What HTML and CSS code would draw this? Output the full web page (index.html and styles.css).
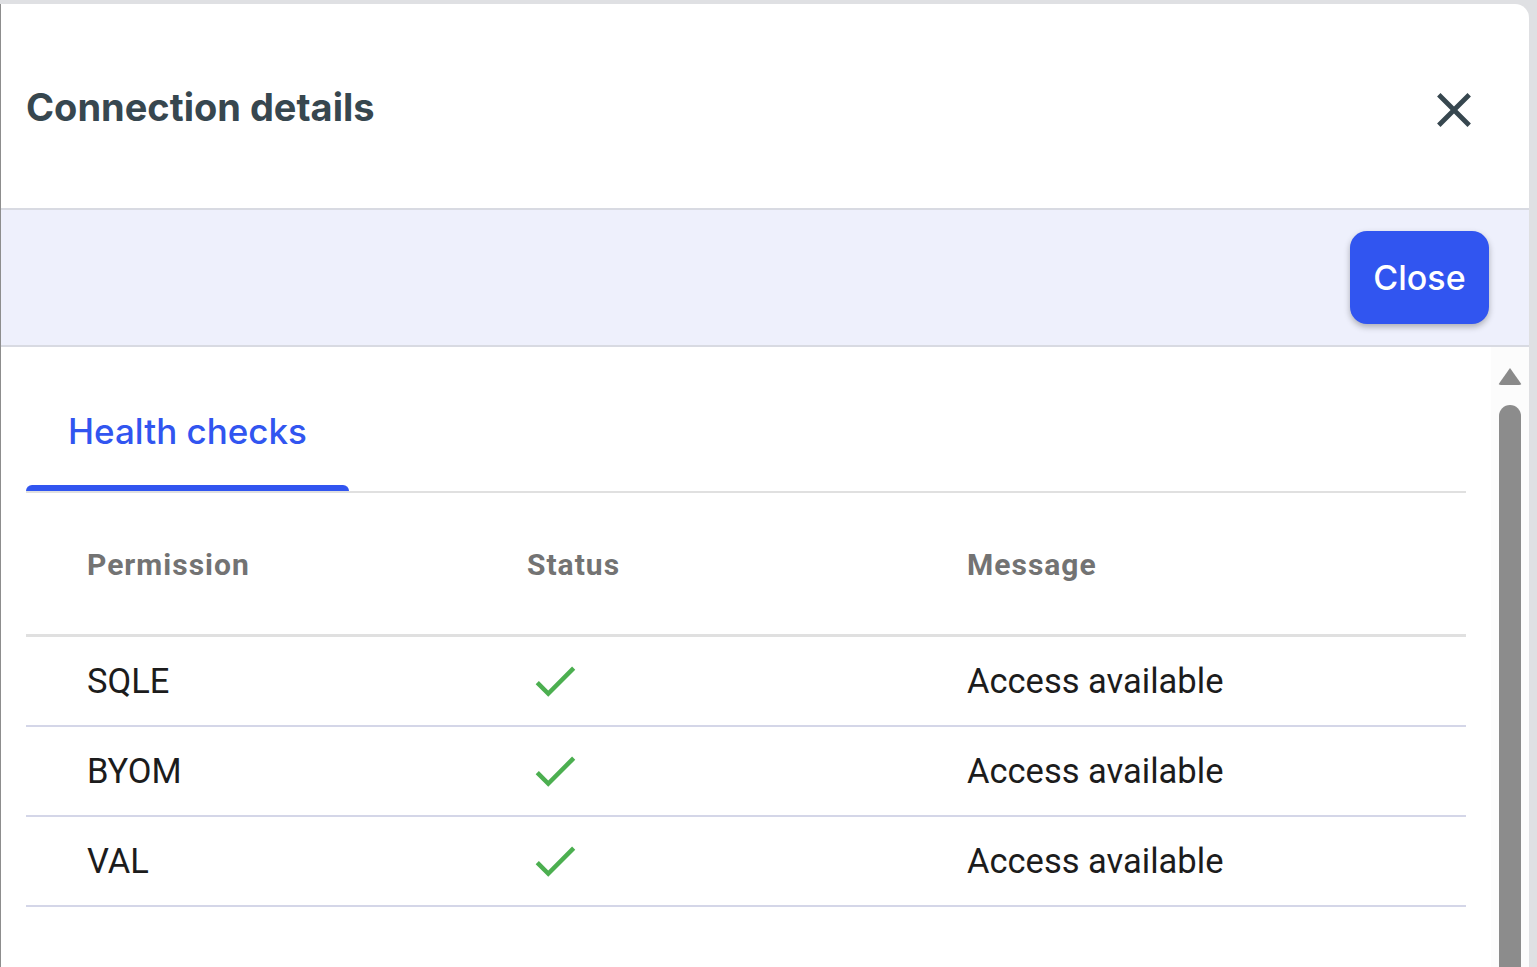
FILE: index.html
```html
<!DOCTYPE html>
<html lang="en">
<head>
<meta charset="utf-8">
<title>Connection details</title>
<link rel="stylesheet" href="styles.css">
</head>
<body>
<div class="page">
  <div class="dialog">
    <header class="dialog-header">
      <h1 class="dialog-title">Connection details</h1>
      <button class="icon-btn" aria-label="Close">
        <svg viewBox="0 0 24 24" width="58" height="58"><path d="M19 6.41 17.59 5 12 10.59 6.41 5 5 6.41 10.59 12 5 17.59 6.41 19 12 13.41 17.59 19 19 17.59 13.41 12z" fill="#37474f"/></svg>
      </button>
    </header>
    <div class="dialog-actions">
      <button class="btn-primary">Close</button>
    </div>
    <div class="dialog-body">
      <div class="content">
        <div class="tabs">
          <div class="tab active">Health checks</div>
        </div>
        <div class="table">
          <div class="row head">
            <div class="cell">Permission</div>
            <div class="cell">Status</div>
            <div class="cell">Message</div>
          </div>
          <div class="row">
            <div class="cell">SQLE</div>
            <div class="cell"><svg class="check" viewBox="0 0 24 24"><path d="M9 16.17 4.83 12l-1.42 1.41L9 19 21 7l-1.41-1.41z"/></svg></div>
            <div class="cell">Access available</div>
          </div>
          <div class="row">
            <div class="cell">BYOM</div>
            <div class="cell"><svg class="check" viewBox="0 0 24 24"><path d="M9 16.17 4.83 12l-1.42 1.41L9 19 21 7l-1.41-1.41z"/></svg></div>
            <div class="cell">Access available</div>
          </div>
          <div class="row">
            <div class="cell">VAL</div>
            <div class="cell"><svg class="check" viewBox="0 0 24 24"><path d="M9 16.17 4.83 12l-1.42 1.41L9 19 21 7l-1.41-1.41z"/></svg></div>
            <div class="cell">Access available</div>
          </div>
        </div>
      </div>
      <div class="scrollbar">
        <div class="scroll-arrow"></div>
        <div class="scroll-thumb"></div>
      </div>
    </div>
  </div>
</div>
</body>
</html>
```

FILE: styles.css
```css
* { box-sizing: border-box; }
html, body { margin: 0; padding: 0; height: 100%; overflow: hidden; }
body { background: #dfe0e3; font-family: "Roboto", "Liberation Sans", sans-serif; }

.page { padding-top: 4px; height: 100%; }

.dialog {
  width: 1529px;
  height: 1100px;
  background: #fff;
  border-left: 1px solid #8d8d8d;
  border-top-right-radius: 14px;
  display: flex;
  flex-direction: column;
}

.dialog-header {
  height: 206px;
  flex: none;
  display: flex;
  align-items: center;
  justify-content: space-between;
  padding: 7px 46px 0 25px;
  border-bottom: 2px solid #d8dae2;
}
.dialog-title {
  margin: 0;
  font-family: "Inter", sans-serif;
  font-weight: 700;
  font-size: 38px;
  color: #37474f;
  position: relative;
  top: -3px;
}
.icon-btn {
  border: 0;
  background: none;
  padding: 0;
  width: 58px;
  height: 58px;
  display: flex;
}

.dialog-actions {
  height: 137px;
  flex: none;
  background: #eef0fc;
  border-bottom: 2px solid #d8dae2;
  display: flex;
  align-items: center;
  justify-content: flex-end;
  padding-right: 40px;
}
.btn-primary {
  width: 139px;
  height: 93px;
  border: 0;
  border-radius: 17px;
  background: #3155f0;
  color: #fff;
  font-family: "Inter", sans-serif;
  font-weight: 500;
  font-size: 34px;
  box-shadow: 0 3px 6px rgba(0,0,0,0.28);
}

.dialog-body {
  flex: 1;
  display: flex;
  min-height: 0;
}
.content {
  flex: 1;
  padding: 0 25px 0 25px;
}

.tabs {
  height: 146px;
  display: flex;
  align-items: flex-end;
  border-bottom: 2px solid #e0e0e0;
}
.tab {
  width: 323px;
  height: 100px;
  display: flex;
  align-items: flex-start;
  justify-content: center;
  padding-top: 19px;
  font-family: "Inter", sans-serif;
  font-weight: 500;
  font-size: 35px;
  color: #3155f0;
  position: relative;
}
.tab.active::after {
  content: "";
  position: absolute;
  left: 0; right: 0; bottom: 0;
  height: 6px;
  background: #3155f0;
  border-radius: 6px 6px 0 0;
}

.table { display: flex; flex-direction: column; }
.row {
  display: grid;
  grid-template-columns: 440px 440px 1fr;
  padding-left: 61px;
  align-items: center;
  height: 90px;
  border-bottom: 2px solid #d4d6e8;
  font-size: 34.5px;
  color: #1c1c1c;
}
.row.head {
  height: 144px;
  border-bottom: 3px solid #e0e0e0;
  font-size: 30px;
  font-weight: 700;
  letter-spacing: 1px;
  color: #737373;
  padding-top: 2px;
}
.cell { white-space: nowrap; }
.check {
  width: 54px;
  height: 54px;
  fill: #4caf50;
  display: block;
  margin-left: 1px;
}

.scrollbar {
  width: 38px;
  flex: none;
  background: #fcfcfc;
  display: flex;
  flex-direction: column;
  align-items: center;
  padding-top: 21px;
  padding-right: 8px;
}
.scroll-arrow {
  width: 0; height: 0;
  border-left: 12px solid transparent;
  border-right: 12px solid transparent;
  border-bottom: 17px solid #8a8a8a;
  border-radius: 3px;
  margin-left: 8px;
}
.scroll-thumb {
  margin-top: 20px;
  margin-left: 8px;
  width: 22px;
  flex: 1;
  background: #8c8c8c;
  border-radius: 11px 11px 0 0;
}
```
